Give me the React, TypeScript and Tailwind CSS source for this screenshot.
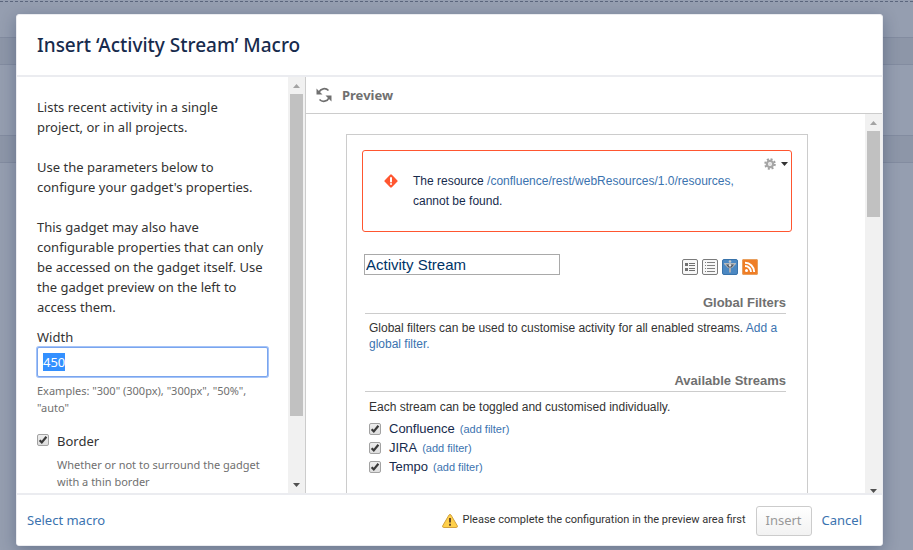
import { useEffect, useRef, type ReactNode } from "react";

function Tick({ id, className }: { id: string; className: string }) {
  return (
    <span className={`relative inline-block size-3 shrink-0 ${className}`}>
      <input
        id={id}
        type="checkbox"
        defaultChecked
        className="peer block size-3 appearance-none rounded-xs border border-[#a2a2a2] bg-linear-to-b from-[#ededed] to-[#dedede]"
      />
      <svg
        viewBox="0 0 12 12"
        className="pointer-events-none absolute inset-0 hidden size-3 peer-checked:block"
        fill="none"
        stroke="#3a3a3a"
        strokeWidth="2.2"
      >
        <path d="M2.6 6.2 L4.8 8.4 L9.4 2.8" />
      </svg>
    </span>
  );
}

function Scrollbar({ thumb, bottom }: { thumb: string; bottom: string }) {
  return (
    <div className={`flex w-[17px] shrink-0 flex-col items-center bg-[#f1f1f1] ${bottom}`}>
      <svg viewBox="0 0 17 17" className="h-[17px] w-full shrink-0">
        <path d="M5 11h7L8.500 7z" fill="#a3a3a3" />
      </svg>
      <div className={`w-[13px] bg-[#c1c1c1] ${thumb}`} />
      <svg viewBox="0 0 17 17" className="mt-auto h-[17px] w-full shrink-0">
        <path d="M5 7h7L8.500 11z" fill="#505050" />
      </svg>
    </div>
  );
}

function SectionHeading({ children }: { children: ReactNode }) {
  return (
    <h3 className="mr-0.5 ml-[3px] border-b border-[#ccc] pt-0.5 text-right text-[13px] leading-5 font-bold text-[#707070]">
      {children}
    </h3>
  );
}

function FullViewIcon() {
  return (
    <svg viewBox="0 0 16 16" className="size-4">
      <rect x="0.5" y="0.500" width="15" height="15" rx="1.500" fill="#f7f7f7" stroke="#7b7b7b" />
      <path d="M3 4h3v3H3zM3 9h3v3H3z" fill="#707070" />
      <path d="M7 4.500h6M7 6.500h6M7 9.500h6M7 11.500h6" stroke="#707070" />
    </svg>
  );
}

function ListViewIcon() {
  return (
    <svg viewBox="0 0 16 16" className="size-4">
      <rect x="0.5" y="0.500" width="15" height="15" rx="1.500" fill="#f7f7f7" stroke="#7b7b7b" />
      <path d="M3 3.500h1M3 6.500h1M3 9.500h1M3 12.500h1M5 3.500h8M5 6.500h8M5 9.500h8M5 12.500h8" stroke="#808080" />
    </svg>
  );
}

function FilterIcon() {
  return (
    <svg viewBox="0 0 16 16" className="size-4">
      <rect x="0.5" y="0.500" width="15" height="15" rx="1.500" fill="#4b88c2" stroke="#3973aa" />
      <path d="M2 4h12v1l-4 4H6L2 5z" fill="#b4b8bc" />
      <path d="M4 5.500h8L9.500 8.500h-3z" fill="#4c5560" />
      <circle cx="8" cy="2.500" r="1.300" fill="#c4c8cc" />
      <path d="M8 4.500l1.500 2L8 8 6.500 6.500z" fill="#dfe2e5" />
      <path d="M7 9h2v4.500H7z" fill="#a9adb2" />
    </svg>
  );
}

function FeedIcon() {
  return (
    <svg viewBox="0 0 16 16" className="size-4">
      <rect width="16" height="16" rx="2" fill="#ef7d25" />
      <rect x="0.5" y="0.500" width="15" height="15" rx="1.500" fill="none" stroke="#e9a05f" />
      <circle cx="4.500" cy="11.500" r="1.500" fill="#fff" />
      <path d="M3 7a6 6 0 0 1 6 6M3 3.800a9.200 9.200 0 0 1 9.200 9.200" fill="none" stroke="#fff" strokeWidth="1.900" />
    </svg>
  );
}

function RefreshIcon() {
  return (
    <svg viewBox="0 0 16 16" className="size-4">
      <path d="M3 5.200A5.800 5.800 0 0 1 12.500 3.500M13 10.800A5.800 5.800 0 0 1 3.500 12.500" fill="none" stroke="#707070" strokeWidth="1.700" />
      <path d="M0.500 1.500v6h6zM15.500 14.500v-6h-6z" fill="#707070" />
    </svg>
  );
}

function GearIcon() {
  return (
    <svg viewBox="0 0 12 12" className="size-3">
      <circle cx="6" cy="6" r="4.800" fill="none" stroke="#a0a0a0" strokeWidth="2" strokeDasharray="2 1.770" />
      <circle cx="6" cy="6" r="3.100" fill="none" stroke="#a6a6a6" strokeWidth="2.400" />
      <circle cx="6" cy="6" r="1.800" fill="#e4e4e4" />
    </svg>
  );
}

function ErrorIcon() {
  return (
    <svg viewBox="0 0 14 14" className="mt-[3px] size-3.5 shrink-0">
      <rect x="2" y="2" width="10" height="10" rx="1.200" transform="rotate(45 7 7)" fill="#ff5630" />
      <path d="M7 4v3.500" stroke="#fff" strokeWidth="2" strokeLinecap="round" />
      <circle cx="7" cy="10" r="1" fill="#fff" />
    </svg>
  );
}

function WarningIcon() {
  return (
    <svg viewBox="0 0 16 14" className="h-3.5 w-4 shrink-0">
      <path d="M7 1Q8-.2 9 1L15.300 11.800Q15.800 13.500 14.200 13.500H1.800Q.2 13.500.7 11.800z" fill="#ffd04a" stroke="#d2a13e" />
      <path d="M8 4v4.500M8 9.800v1.900" stroke="#694b2c" strokeWidth="2" />
    </svg>
  );
}

const streams = ["Confluence", "JIRA", "Tempo"];

function Parameters() {
  const width = useRef<HTMLInputElement>(null);
  useEffect(() => {
    width.current?.focus();
    width.current?.select();
  }, []);
  return (
    <div className="flex w-[289px] shrink-0 overflow-hidden border-r border-[#ccc]">
      <form className="min-w-0 flex-1 overflow-hidden pt-5 pl-5 text-[13px] leading-5 whitespace-nowrap text-[#333]">
        <p>
          Lists recent activity in a single
          <br />
          project, or in all projects.
        </p>
        <p className="mt-5">
          Use the parameters below to
          <br />
          configure your gadget's properties.
        </p>
        <p className="mt-5">
          This gadget may also have
          <br />
          configurable properties that can only
          <br />
          be accessed on the gadget itself. Use
          <br />
          the gadget preview on the left to
          <br />
          access them.
        </p>
        <label htmlFor="width" className="mt-2.5 block">
          Width
        </label>
        <input
          ref={width}
          id="width"
          type="text"
          defaultValue="450"
          className="block h-[30px] w-[231px] rounded-xs border border-[#7aa5ee] bg-white px-[5px] text-[13px] ring-1 ring-[#a4c3f8] outline-none selection:bg-[#3390ff] selection:text-white"
        />
        <p className="mt-[5px] text-[11px] leading-[17px] text-[#707070]">
          Examples: "300" (300px), "300px", "50%",
          <br />
          "auto"
        </p>
        <div className="mt-[15px] flex">
          <Tick id="border" className="mt-[3px]" />
          <label htmlFor="border" className="pl-2">
            Border
          </label>
        </div>
        <p className="mt-[5px] pl-5 text-[11px] leading-[17px] text-[#707070]">
          Whether or not to surround the gadget
          <br />
          with a thin border
        </p>
      </form>
      <Scrollbar thumb="h-[322px]" bottom="" />
    </div>
  );
}

function Gadget() {
  return (
    <div className="mt-5 ml-10 w-[462px] border border-[#ccc] px-[15px] pt-[15px] font-['Liberation_Sans',Arial,sans-serif] text-xs leading-4 text-[#333]">
      <div className="flex h-[82px] rounded-[3px] border border-[#ff5630] pt-5 pl-[21px] text-[#172b4d]">
        <ErrorIcon />
        <p className="ml-[15px] flex-1 leading-5 whitespace-nowrap">
          The resource{" "}
          <a href="#resource" className="text-[#3b73af]">
            /confluence/rest/webResources/1.0/resources,
          </a>
          <br />
          cannot be found.
        </p>
        <button type="button" aria-label="Gadget menu" className="-mt-[13px] mr-[3px] flex h-3 items-center gap-[5px]">
          <GearIcon />
          <svg viewBox="0 0 7 4" className="h-1 w-[7px]">
            <path d="M0 0h7L3.500 4z" fill="#333" />
          </svg>
        </button>
      </div>
      <div className="mt-[22px] flex items-end justify-between pr-[34px] pl-0.5">
        <input
          type="text"
          aria-label="Gadget title"
          defaultValue="Activity Stream"
          className="h-[21px] w-[196px] border border-[#a9a9a9] px-px text-[15px] text-[#003366]"
        />
        <div className="flex gap-1">
          <button type="button" aria-label="Full view"><FullViewIcon /></button>
          <button type="button" aria-label="List view"><ListViewIcon /></button>
          <button type="button" aria-label="Filter"><FilterIcon /></button>
          <button type="button" aria-label="Feed"><FeedIcon /></button>
        </div>
      </div>
      <div className="mt-4 mr-1">
        <SectionHeading>Global Filters</SectionHeading>
        <p className="mt-1.5 pl-[7px] whitespace-nowrap">
          Global filters can be used to customise activity for all enabled streams.{" "}
          <a href="#add" className="text-[#3b73af]">
            Add a
            <br />
            global filter.
          </a>
        </p>
        <div className="mt-[17px]">
          <SectionHeading>Available Streams</SectionHeading>
        </div>
        <p className="mt-[7px] pl-[7px]">Each stream can be toggled and customised individually.</p>
        <ul className="mt-1.5 pl-[7px]">
          {streams.map((name) => (
            <li key={name} className="flex h-[19px] items-baseline">
              <Tick id={name} className="translate-y-0.5" />
              <label htmlFor={name} className="ml-2 text-[13px] text-[#172b4d]">
                {name}
              </label>
              <a href="#add-filter" className="ml-[5px] text-[11px] text-[#3b73af]">
                (add filter)
              </a>
            </li>
          ))}
        </ul>
      </div>
      <div className="h-24" />
    </div>
  );
}

export default function App() {
  return (
    <div className="relative h-screen overflow-hidden bg-[#959eb0] font-['Noto_Sans','Open_Sans',sans-serif]">
      <div className="pt-px">
        <div className="border-t border-dashed border-[#5b667d]" />
        <div className="mt-[35px] h-7 border-y border-[#838ca0] bg-[#8d96a8]" />
        <div className="mt-[70px] h-7 border-y border-[#838ca0] bg-[#8d96a8]" />
      </div>
      <div
        role="dialog"
        aria-labelledby="dialog-title"
        className="absolute inset-x-0 top-3.5 bottom-1 mr-[30px] ml-4 flex flex-col overflow-hidden rounded-[3px] border border-[#ebecf0] bg-white shadow-[0_4px_16px_rgba(9,30,66,0.3)]"
      >
        <header className="flex h-[62px] shrink-0 items-center border-b-2 border-[#ebecf0] pl-5">
          <h2 id="dialog-title" className="text-[19px] leading-6 font-medium text-[#172b4d]">
            Insert ‘Activity Stream’ Macro
          </h2>
        </header>
        <div className="flex min-h-0 flex-1">
          <Parameters />
          <section className="flex min-w-0 flex-1 flex-col">
            <div className="flex h-[37px] shrink-0 items-center gap-2.5 border-b border-[#ccc] pl-2.5 text-[#707070]">
              <button type="button" aria-label="Refresh preview"><RefreshIcon /></button>
              <h3 className="text-[13px] leading-5 font-bold">Preview</h3>
            </div>
            <div className="flex min-h-0 flex-1">
              <div className="min-w-0 flex-1 overflow-hidden">
                <Gadget />
              </div>
              <Scrollbar thumb="h-[86px]" bottom="-mb-1.5" />
            </div>
          </section>
        </div>
        <footer className="relative flex h-[52px] shrink-0 items-center border-t-2 border-[#ebecf0] bg-white pt-px pr-5 pl-2.5 text-[13px] text-[#3b73af]">
          <a href="#select">Select macro</a>
          <div className="ml-auto flex items-center gap-1 font-[Roboto,sans-serif] text-[11px] whitespace-nowrap text-[#333]">
            <WarningIcon />
            <span>Please complete the configuration in the preview area first</span>
          </div>
          <button
            type="button"
            disabled
            className="ml-2.5 h-[30px] w-14 rounded-[3px] border border-[#ccc] bg-linear-to-b from-white to-[#f2f2f2] text-[#999]"
          >
            Insert
          </button>
          <button type="button" className="ml-2.5">
            Cancel
          </button>
        </footer>
      </div>
    </div>
  );
}
